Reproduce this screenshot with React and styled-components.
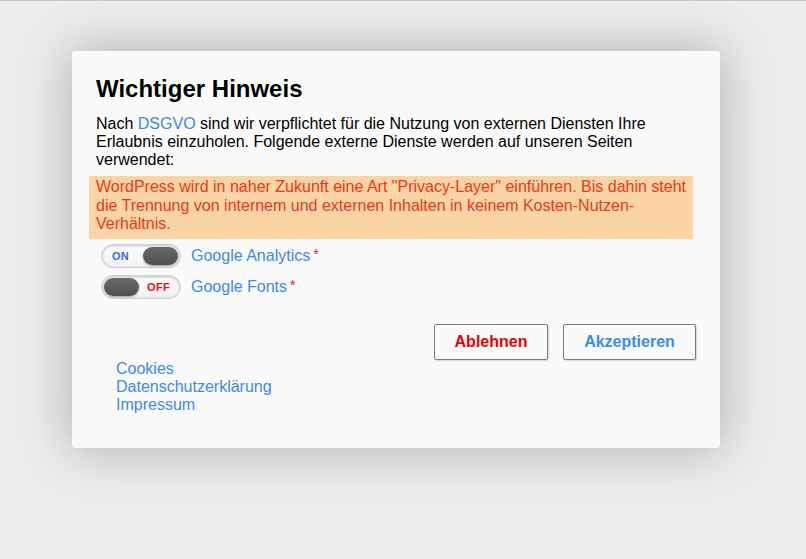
import React from "react";
import styled, { createGlobalStyle } from "styled-components";

const Global = createGlobalStyle`
  html, body { margin: 0; padding: 0; }
  body {
    background: #ececec;
    font-family: "Liberation Sans", Arial, sans-serif;
    color: #000;
    border-top: 1px solid #c6c6c6;
    min-height: 558px;
  }
`;

const Page = styled.div`
  padding: 50px 0 0 72px;
`;

const Modal = styled.div`
  width: 648px;
  box-sizing: border-box;
  background: #fafafa;
  border-radius: 3px;
  box-shadow: 0 0 50px rgba(0, 0, 0, 0.28);
  padding: 24px 24px 34px 24px;
`;

const Title = styled.h2`
  margin: 0 0 12px 0;
  font-size: 24px;
  font-weight: bold;
  line-height: 28px;
`;

const Text = styled.p`
  margin: 0;
  font-size: 16px;
  line-height: 18px;
`;

const Link = styled.a`
  color: #3d88f5;
  text-decoration: none;
`;

const Notice = styled.div`
  margin: 7px 0 5px -7px;
  width: 604px;
  box-sizing: border-box;
  background: #fad4a4;
  color: #f0361a;
  font-size: 16px;
  line-height: 18.5px;
  padding: 2px 7px 5px 7px;
`;

const Services = styled.div`
  display: flex;
  flex-direction: column;
  gap: 7px;
  padding-left: 5px;
`;

const ServiceRow = styled.div`
  display: flex;
  align-items: center;
  gap: 10px;
  font-size: 16px;
`;

const Toggle = styled.div`
  position: relative;
  width: 80px;
  height: 24px;
  box-sizing: border-box;
  border-radius: 12px;
  border: 1px solid #d0d0d0;
  background: linear-gradient(#fdfdfd, #f1f1f1);
  box-shadow: inset 0 1px 3px rgba(0, 0, 0, 0.25);
  display: flex;
  align-items: center;
  justify-content: ${(p) => (p.$on ? "flex-start" : "flex-end")};
  padding: 0 ${(p) => (p.$on ? "0 0 10px" : "10px 0 0")};
`;

const ToggleLabel = styled.span`
  font-size: 11px;
  font-weight: bold;
  letter-spacing: 0.3px;
  color: ${(p) => (p.$on ? "#3b6cf0" : "#f01010")};
`;

const Knob = styled.span`
  position: absolute;
  top: 2px;
  ${(p) => (p.$on ? "right: 2px;" : "left: 2px;")}
  width: 35px;
  height: 18px;
  border-radius: 9px;
  background: linear-gradient(#6a6a6a, #4e4f4e);
  box-shadow: 0 1px 2px rgba(0, 0, 0, 0.35);
`;

const ServiceName = styled.span`
  color: #3d88f5;
`;

const Star = styled.span`
  color: #e0201a;
  font-size: 14px;
  margin-left: 3px;
  vertical-align: top;
  position: relative;
  top: -1px;
`;

const Actions = styled.div`
  display: flex;
  justify-content: flex-end;
  gap: 15px;
  margin-top: 25px;
`;

const Button = styled.button`
  height: 36px;
  width: ${(p) => p.$w}px;
  box-sizing: border-box;
  border: 1px solid #7a7a7a;
  border-radius: 2px;
  background: #fafafa;
  box-shadow: 1px 1px 2px rgba(0, 0, 0, 0.15);
  font-family: "Liberation Sans", Arial, sans-serif;
  font-weight: bold;
  font-size: 16px;
  color: ${(p) => p.$color};
  padding: 0;
  cursor: pointer;
`;

const Links = styled.ul`
  list-style: none;
  margin: 0;
  padding: 0 0 0 20px;
  display: flex;
  flex-direction: column;
  font-size: 16px;
  line-height: 18px;
`;

function Service({ on, name }) {
  return (
    <ServiceRow>
      <Toggle $on={on}>
        <ToggleLabel $on={on}>{on ? "ON" : "OFF"}</ToggleLabel>
        <Knob $on={on} />
      </Toggle>
      <span>
        <ServiceName>{name}</ServiceName>
        <Star>*</Star>
      </span>
    </ServiceRow>
  );
}

export default function App() {
  return (
    <>
      <Global />
      <Page>
        <Modal>
          <Title>Wichtiger Hinweis</Title>
          <Text>
            Nach <Link href="#">DSGVO</Link> sind wir verpflichtet für die Nutzung von externen Diensten Ihre
            Erlaubnis einzuholen. Folgende externe Dienste werden auf unseren Seiten verwendet:
          </Text>
          <Notice>
            WordPress wird in naher Zukunft eine Art "Privacy-Layer" einführen. Bis dahin steht die Trennung
            von internem und externen Inhalten in keinem Kosten-Nutzen-Verhältnis.
          </Notice>
          <Services>
            <Service on name="Google Analytics" />
            <Service on={false} name="Google Fonts" />
          </Services>
          <Actions>
            <Button $w={114} $color="#e60000">Ablehnen</Button>
            <Button $w={133} $color="#3a8cf5">Akzeptieren</Button>
          </Actions>
          <Links>
            <li><Link href="#">Cookies</Link></li>
            <li><Link href="#">Datenschutzerklärung</Link></li>
            <li><Link href="#">Impressum</Link></li>
          </Links>
        </Modal>
      </Page>
    </>
  );
}
